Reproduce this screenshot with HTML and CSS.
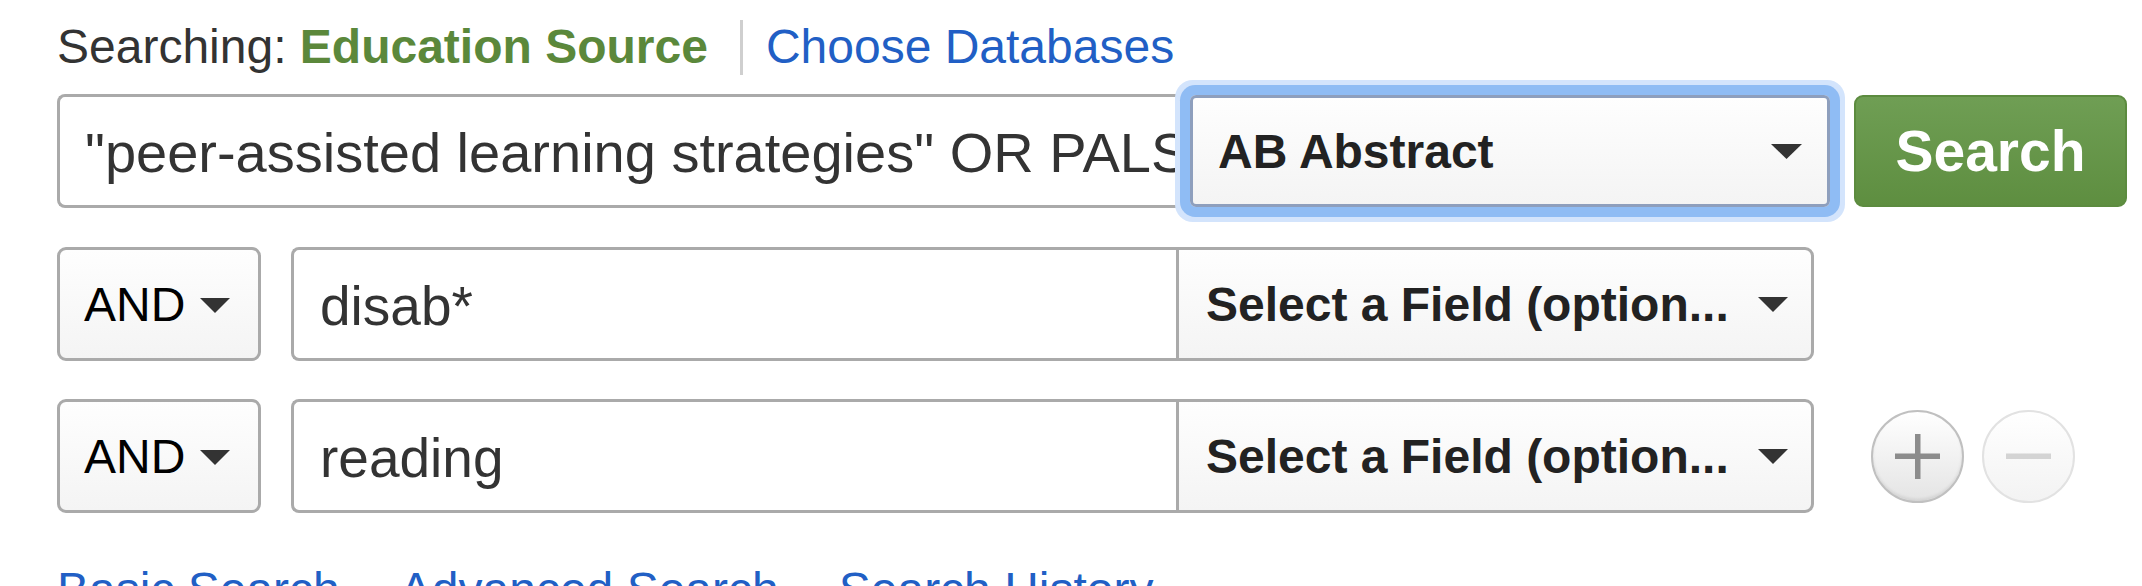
FILE: index.html
```html
<!DOCTYPE html>
<html lang="en">
<head>
<meta charset="utf-8">
<title>Search</title>
<link rel="stylesheet" href="styles.css">
</head>
<body>
<div class="page">
  <div class="searching">
    <span class="label">Searching: </span><span class="db">Education Source</span><span class="sep"></span><a class="choose" href="#">Choose Databases</a>
  </div>

  <div class="row row-main">
    <div class="term term-main">"peer-assisted learning strategies" OR PALS</div>
    <div class="field field-focus">
      <span class="field-text">AB Abstract</span>
      <svg class="caret" width="31" height="15" viewBox="0 0 31 15"><polygon points="0,0 31,0 15.5,15" fill="#333"/></svg>
    </div>
    <button class="search-btn">Search</button>
  </div>

  <div class="row row-sub">
    <div class="bool">
      <span class="bool-text">AND</span>
      <svg class="caret" width="30" height="15" viewBox="0 0 30 15"><polygon points="0,0 30,0 15,15" fill="#333"/></svg>
    </div>
    <div class="term term-sub">disab*</div>
    <div class="field field-sub">
      <span class="field-text">Select a Field (option...</span>
      <svg class="caret" width="30" height="15" viewBox="0 0 30 15"><polygon points="0,0 30,0 15,15" fill="#333"/></svg>
    </div>
  </div>

  <div class="row row-sub row-last">
    <div class="bool">
      <span class="bool-text">AND</span>
      <svg class="caret" width="30" height="15" viewBox="0 0 30 15"><polygon points="0,0 30,0 15,15" fill="#333"/></svg>
    </div>
    <div class="term term-sub">reading</div>
    <div class="field field-sub">
      <span class="field-text">Select a Field (option...</span>
      <svg class="caret" width="30" height="15" viewBox="0 0 30 15"><polygon points="0,0 30,0 15,15" fill="#333"/></svg>
    </div>
    <div class="circle-btns">
      <span class="circle circle-add">
        <svg width="93" height="93" viewBox="0 0 93 93"><rect x="44" y="24" width="5.5" height="45" fill="#8c8c8c"/><rect x="24" y="43.5" width="45" height="5.5" fill="#8c8c8c"/></svg>
      </span>
      <span class="circle circle-remove">
        <svg width="93" height="93" viewBox="0 0 93 93"><rect x="24" y="43.5" width="45" height="5.5" fill="#d4d4d4"/></svg>
      </span>
    </div>
  </div>

  <div class="links">
    <a href="#">Basic Search</a>
    <a href="#">Advanced Search</a>
    <a href="#">Search History</a>
  </div>
</div>
</body>
</html>
```

FILE: styles.css
```css
html, body {
  margin: 0;
  padding: 0;
  background: #fff;
}

.page {
  padding: 19px 0 0 57px;
  font-family: "Liberation Sans", Arial, Helvetica, sans-serif;
  font-size: 48px;
  color: #333;
}

.searching {
  display: flex;
  align-items: center;
  height: 56px;
  line-height: 56px;
  white-space: nowrap;
}

.label {
  color: #333;
  white-space: pre;
}

.db {
  color: #5b883b;
  font-weight: bold;
}

.sep {
  display: inline-block;
  width: 3px;
  height: 55px;
  background: #cfcfcf;
  margin: 0 23px 0 32px;
}

.choose {
  color: #215fc5;
  text-decoration: none;
}

.row {
  display: flex;
  align-items: center;
}

.row-main {
  margin-top: 19px;
  height: 114px;
}

.term {
  box-sizing: border-box;
  height: 114px;
  display: flex;
  align-items: center;
  background: #fff;
  border: 3px solid #aaa;
  border-right: none;
  border-radius: 8px 0 0 8px;
  overflow: hidden;
  white-space: nowrap;
  color: #333;
  font-size: 55px;
}

.term-main {
  width: 1133px;
  padding-left: 25px;
  font-size: 56px;
  padding-top: 2px;
}

.field {
  box-sizing: border-box;
  display: flex;
  align-items: center;
  justify-content: space-between;
  background: linear-gradient(#fefefe, #f4f4f4);
  font-weight: bold;
  color: #222;
  white-space: nowrap;
}

.field-focus {
  position: relative;
  z-index: 1;
  width: 640px;
  height: 112px;
  border: 3px solid #8e9fbd;
  border-radius: 6px;
  padding: 0 25px 0 25px;
  box-shadow: 0 0 0 10px #8fbcf4, 0 0 0 15px #d3e4fc;
}

.search-btn {
  box-sizing: border-box;
  width: 273px;
  height: 112px;
  margin-left: 24px;
  border: 2px solid #5c8b3f;
  border-radius: 9px;
  background: linear-gradient(#6f9e54, #5e8e40);
  color: #fff;
  font-family: "Liberation Sans", Arial, Helvetica, sans-serif;
  font-weight: bold;
  font-size: 57px;
  padding: 0;
}

.row-sub {
  margin-top: 39px;
  height: 114px;
}

.row-last {
  margin-top: 38px;
}

.bool {
  box-sizing: border-box;
  width: 204px;
  height: 114px;
  display: flex;
  align-items: center;
  padding-left: 24px;
  border: 3px solid #aaa;
  border-radius: 9px;
  background: linear-gradient(#fefefe, #f4f4f4);
  color: #000;
}

.bool .caret {
  margin-left: 15px;
  margin-top: 2px;
}

.term-sub {
  width: 885px;
  margin-left: 30px;
  padding-left: 26px;
  padding-top: 4px;
}

.field-sub {
  width: 638px;
  height: 114px;
  border: 3px solid #aaa;
  border-radius: 0 9px 9px 0;
  padding: 0 23px 0 27px;
}

.circle-btns {
  display: flex;
  margin-left: 57px;
  gap: 18px;
}

.circle {
  box-sizing: border-box;
  width: 93px;
  height: 93px;
  border-radius: 50%;
  display: block;
  position: relative;
}

.circle svg {
  display: block;
  position: absolute;
  left: -2px;
  top: -2px;
}

.circle-add {
  border: 2px solid #c0c0c0;
  background: linear-gradient(#ffffff, #e4e4e4);
  box-shadow: inset 0 -2px 3px rgba(0,0,0,0.08);
}

.circle-remove {
  border: 2px solid #e2e2e2;
  background: linear-gradient(#ffffff, #f3f3f3);
}

.links {
  margin-top: 49px;
  line-height: 56px;
  display: flex;
  gap: 60px;
  white-space: nowrap;
}

.links a {
  color: #215fc5;
  text-decoration: none;
}
```
